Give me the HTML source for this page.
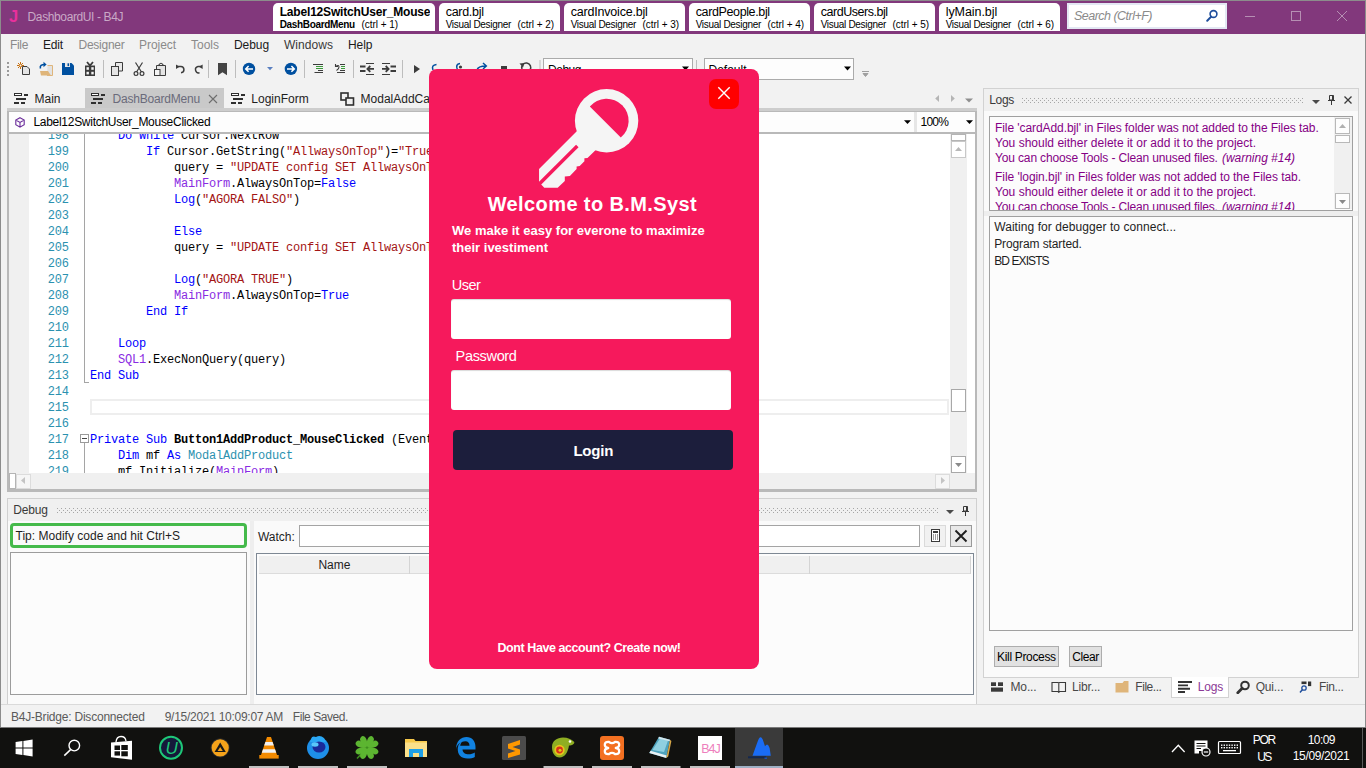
<!DOCTYPE html>
<html><head><meta charset="utf-8"><title>DashboardUI - B4J</title>
<style>
*{box-sizing:border-box;margin:0;padding:0}
html,body{width:1366px;height:768px;overflow:hidden;background:#f2f2f2;font-family:"Liberation Sans",sans-serif;font-size:12px;color:#1e1e1e}
.a{position:absolute}
.t{position:absolute;white-space:nowrap;line-height:1}
.code{font-family:"Liberation Mono",monospace;font-size:12px;letter-spacing:-0.201px;position:absolute;white-space:pre;line-height:16px;color:#000}
.ln{color:#2b91af}
.kw{color:#0000ff}.st{color:#a31515}.ob{color:#8a2be2}.ty{color:#2b91af}
</style></head><body>
<!-- sec_title -->
<div class="a" style="left:0px;top:0px;width:1366px;height:34px;background:#82387c;"></div>
<div class="a" style="left:0px;top:0px;width:1366px;height:1px;background:#8c8c8c;"></div>
<span class="t" style="left:9px;top:8px;font-size:16.5px;font-weight:bold;color:#e8309c;">J</span>
<span class="t" style="left:27.6px;top:11px;font-size:12px;color:#c9a9c6;letter-spacing:-0.385px;">DashboardUI - B4J</span>
<div class="a" style="left:273px;top:3px;width:162px;height:28px;background:#ffffff;border-radius:5px 5px 0 0;"></div>
<div class="a" style="left:439px;top:3px;width:121px;height:28px;background:#ffffff;border-radius:5px 5px 0 0;"></div>
<div class="a" style="left:564px;top:3px;width:121px;height:28px;background:#ffffff;border-radius:5px 5px 0 0;"></div>
<div class="a" style="left:689px;top:3px;width:121px;height:28px;background:#ffffff;border-radius:5px 5px 0 0;"></div>
<div class="a" style="left:814px;top:3px;width:121px;height:28px;background:#ffffff;border-radius:5px 5px 0 0;"></div>
<div class="a" style="left:939px;top:3px;width:121px;height:28px;background:#ffffff;border-radius:5px 5px 0 0;"></div>
<div class="a" style="left:273px;top:3px;width:157px;height:28px;overflow:hidden">
<span class="t" style="left:6.7px;top:3px;font-size:12px;font-weight:bold;color:#000;letter-spacing:-0.180px;">Label12SwitchUser_MouseClicked</span>
<span class="t" style="left:6.7px;top:17px;font-size:10px;font-weight:bold;color:#000;letter-spacing:-0.343px;">DashBoardMenu</span>
<span class="t" style="left:88.5px;top:17px;font-size:10px;color:#000;letter-spacing:-0.045px;">(ctrl + 1)</span>
</div>
<span class="t" style="left:445.7px;top:6px;font-size:12.5px;color:#000;letter-spacing:-0.287px;">card.bjl</span>
<span class="t" style="left:445.7px;top:20px;font-size:10px;color:#000;letter-spacing:-0.304px;">Visual Designer</span>
<span class="t" style="left:517.5px;top:20px;font-size:10px;color:#000;letter-spacing:-0.045px;">(ctrl + 2)</span>
<span class="t" style="left:570.7px;top:6px;font-size:12.5px;color:#000;letter-spacing:-0.193px;">cardInvoice.bjl</span>
<span class="t" style="left:570.7px;top:20px;font-size:10px;color:#000;letter-spacing:-0.304px;">Visual Designer</span>
<span class="t" style="left:642.5px;top:20px;font-size:10px;color:#000;letter-spacing:-0.045px;">(ctrl + 3)</span>
<span class="t" style="left:695.7px;top:6px;font-size:12.5px;color:#000;letter-spacing:-0.373px;">cardPeople.bjl</span>
<span class="t" style="left:695.7px;top:20px;font-size:10px;color:#000;letter-spacing:-0.304px;">Visual Designer</span>
<span class="t" style="left:767.5px;top:20px;font-size:10px;color:#000;letter-spacing:-0.045px;">(ctrl + 4)</span>
<span class="t" style="left:820.7px;top:6px;font-size:12.5px;color:#000;letter-spacing:-0.457px;">cardUsers.bjl</span>
<span class="t" style="left:820.7px;top:20px;font-size:10px;color:#000;letter-spacing:-0.304px;">Visual Designer</span>
<span class="t" style="left:892.5px;top:20px;font-size:10px;color:#000;letter-spacing:-0.045px;">(ctrl + 5)</span>
<span class="t" style="left:945.7px;top:6px;font-size:12.5px;color:#000;letter-spacing:-0.060px;">lyMain.bjl</span>
<span class="t" style="left:945.7px;top:20px;font-size:10px;color:#000;letter-spacing:-0.304px;">Visual Designer</span>
<span class="t" style="left:1017.5px;top:20px;font-size:10px;color:#000;letter-spacing:-0.045px;">(ctrl + 6)</span>
<div class="a" style="left:1067px;top:3px;width:160px;height:26px;background:#ffffff;border:2px solid #e3e8f3;"></div>
<span class="t" style="left:1074px;top:10px;font-size:12.5px;font-style:italic;color:#8a8a8a;letter-spacing:-0.519px;">Search (Ctrl+F)</span>
<svg class="a" style="left:1204px;top:8px" width="16" height="16" viewBox="0 0 16 16"><circle cx="9.5" cy="6" r="3.4" fill="none" stroke="#1f4e9c" stroke-width="1.6"/><path d="M7.2 8.6 L3.2 12.8" stroke="#1f4e9c" stroke-width="2" stroke-linecap="round"/></svg>
<svg class="a" style="left:1240px;top:6px" width="120" height="22" viewBox="0 0 120 22"><g stroke="#b68fb3" stroke-width="1" fill="none"><path d="M5 10.5 H15"/><rect x="51.5" y="5.5" width="9" height="9"/><path d="M97 5 L107 15 M107 5 L97 15"/></g></svg>
<!-- sec_menu -->
<span class="t" style="left:10px;top:39px;font-size:12px;color:#8a8a8a;letter-spacing:-0.334px;">File</span>
<span class="t" style="left:43px;top:39px;font-size:12px;color:#1a1a1a;letter-spacing:-0.169px;">Edit</span>
<span class="t" style="left:78.5px;top:39px;font-size:12px;color:#8a8a8a;letter-spacing:-0.253px;">Designer</span>
<span class="t" style="left:139px;top:39px;font-size:12px;color:#8a8a8a;letter-spacing:-0.050px;">Project</span>
<span class="t" style="left:191px;top:39px;font-size:12px;color:#8a8a8a;letter-spacing:-0.003px;">Tools</span>
<span class="t" style="left:234px;top:39px;font-size:12px;color:#1a1a1a;letter-spacing:-0.072px;">Debug</span>
<span class="t" style="left:284px;top:39px;font-size:12px;color:#3a3a3a;letter-spacing:0.046px;">Windows</span>
<span class="t" style="left:348px;top:39px;font-size:12px;color:#1a1a1a;letter-spacing:-0.045px;">Help</span>
<!-- sec_toolbar -->
<svg class="a" style="left:0;top:57px" width="880" height="26" viewBox="0 57 880 26"><rect x="7" y="62" width="2" height="2" fill="#9a9a9a"/><rect x="7" y="66" width="2" height="2" fill="#9a9a9a"/><rect x="7" y="70" width="2" height="2" fill="#9a9a9a"/><rect x="7" y="74" width="2" height="2" fill="#9a9a9a"/><rect x="103" y="60" width="1" height="18" fill="#bdbdbd"/><rect x="208" y="60" width="1" height="18" fill="#bdbdbd"/><rect x="235" y="60" width="1" height="18" fill="#bdbdbd"/><rect x="304" y="60" width="1" height="18" fill="#bdbdbd"/><rect x="353" y="60" width="1" height="18" fill="#bdbdbd"/><rect x="402" y="60" width="1" height="18" fill="#bdbdbd"/><rect x="539.5" y="60" width="1" height="18" fill="#bdbdbd"/><rect x="696" y="60" width="1" height="18" fill="#bdbdbd"/><g stroke="#c8700f" stroke-width="1" fill="none"><path d="M20.5 62 V69 M17 65.5 H24 M18 63 L23 68 M23 63 L18 68"/></g><circle cx="20.5" cy="65.5" r="1" fill="#f0f0f0"/><path d="M22.5 66.5 H27 L29.5 69 V74.5 H22.5 Z" fill="#e4e4e4" stroke="#3c3c3c" stroke-width="1"/><path d="M47.5 65.5 H52.5 V75.5 H47" fill="#e2e2e2" stroke="#dfb57a" stroke-width="1"/><path d="M40 71 H48 L51 75.5 H41 Z" fill="#dfb57a"/><path d="M40.5 68.5 C39.5 65.5 41.5 64.5 45 64.5" fill="none" stroke="#0050a0" stroke-width="1.6"/><path d="M43.5 61.8 L46.6 64.5 L43.5 67.2 Z" fill="#0050a0"/><path d="M62 63 H71.5 L74 65.5 V75 H62 Z" fill="#0050a0"/><rect x="65" y="63" width="5" height="4" fill="#e8e8e8"/><rect x="67.5" y="63.3" width="1.6" height="2.8" fill="#0050a0"/><rect x="85" y="65.5" width="10" height="10.5" fill="#3c3c3c"/><path d="M87 62 L90 65.5 L93 62" fill="none" stroke="#3c3c3c" stroke-width="1.8"/><rect x="86.5" y="67.2" width="2.4" height="2.6" fill="#f4f4f4"/><rect x="91.3" y="67.2" width="2.4" height="2.6" fill="#f4f4f4"/><rect x="86.5" y="71.8" width="2.4" height="2.6" fill="#f4f4f4"/><rect x="91.3" y="71.8" width="2.4" height="2.6" fill="#f4f4f4"/><path d="M115.5 67 V62.5 H122.5 V71 H119" fill="#e8e8e8" stroke="#3c3c3c" stroke-width="1"/><rect x="111.5" y="66.5" width="7" height="9" fill="#e4e4e4" stroke="#3c3c3c" stroke-width="1"/><g fill="none" stroke="#3c3c3c" stroke-width="1.2"><path d="M135.5 62.5 L141.5 72 M142.5 62.5 L136.5 72"/><circle cx="136" cy="73.6" r="1.9"/><circle cx="142" cy="73.6" r="1.9"/></g><path d="M160 75.5 H165.5 V65.5 H156.5 V69" fill="#e4e4e4" stroke="#3c3c3c" stroke-width="1"/><path d="M158.5 65.5 Q161 61 163.5 65.5" fill="none" stroke="#3c3c3c" stroke-width="1.2"/><rect x="154.5" y="69.5" width="5.5" height="6" fill="#f4f4f4" stroke="#3c3c3c" stroke-width="1"/><path d="M177 66.5 H180.5 A3 3 0 0 1 181 72.8 " fill="none" stroke="#3c3c3c" stroke-width="1.5"/><path d="M176 64.5 V69 L179.5 66.7 Z" fill="#3c3c3c"/><path d="M201.5 66.5 H198 A3 3 0 0 0 199.5 72.8" fill="none" stroke="#3c3c3c" stroke-width="1.5"/><path d="M202.6 64.5 V69 L199 66.7 Z" fill="#3c3c3c"/><path d="M218 63 H227 V75.3 L222.5 72.2 L218 75.3 Z" fill="#444"/><circle cx="249" cy="68.9" r="6.2" fill="#0050a0"/><path d="M246 68.9 H253 M248.6 66 L245.7 68.9 L248.6 71.8" fill="none" stroke="#fff" stroke-width="1.5"/><path d="M267 67 H273 L270 70.2 Z" fill="#5a7fc0"/><circle cx="290.9" cy="68.9" r="6.2" fill="#0050a0"/><path d="M287 68.9 H294 M291.4 66 L294.3 68.9 L291.4 71.8" fill="none" stroke="#fff" stroke-width="1.5"/><g stroke-width="1"><path d="M313 64.5 H323 M318 70.5 H323 M314.5 72.5 H323" stroke="#3c3c3c"/><path d="M316 66.5 H323 M316 68.5 H323" stroke="#3a9a3a"/></g><g stroke-width="1" fill="none"><path d="M340 64.5 H345 M340 70.5 H345 M337 72.5 H345" stroke="#3c3c3c"/><path d="M341 66.5 H345 M341 68.5 H345" stroke="#3a9a3a"/><path d="M335.5 64 V66.5 H338 M336 66.3 Q339 64.5 339 67 Q339 69 336.5 70.5" stroke="#3c3c3c" stroke-width="1.1"/></g><g stroke="#3c3c3c" fill="none"><path d="M366 63.5 H374 M366 74.5 H374" stroke-width="1"/><path d="M360 66.5 H365.5 M360 71 H365.5" stroke-width="2"/><path d="M367.5 68.9 H374 M370.3 66 L367.4 68.9 L370.3 71.8" stroke-width="1.8"/></g><g stroke="#3c3c3c" fill="none"><path d="M382 63.5 H390 M382 74.5 H390" stroke-width="1"/><path d="M390.5 66.5 H396 M390.5 71 H396" stroke-width="2"/><path d="M382 68.9 H388.5 M385.7 66 L388.6 68.9 L385.7 71.8" stroke-width="1.8"/></g><path d="M414 65 L420 69.1 L414 73.2 Z" fill="#3c3c3c"/><g fill="none" stroke="#0050a0" stroke-width="1.5"><path d="M433 70 Q431 65 436.5 64.5"/><path d="M457.5 70 Q455 64 460 63.5"/><path d="M477 70 Q478 66 486 66 M483 63 L486.3 66 L483 69"/></g><circle cx="460.5" cy="67" r="1.6" fill="#3c3c3c"/><rect x="501" y="66" width="6" height="6" fill="#3c3c3c"/><path d="M522 69 A4.5 4.5 0 1 1 530 70" fill="none" stroke="#3c3c3c" stroke-width="1.5"/><path d="M519.5 63.5 L524.5 63 L523 67.5 Z" fill="#3c3c3c"/><path d="M862 71.5 H869 M863 73.5 H868 L865.5 76.5 Z" stroke="#a0a0a0" fill="#a0a0a0" stroke-width="1"/></svg>
<div class="a" style="left:543px;top:58px;width:150px;height:22px;background:#fdfdfd;border:1px solid #ababab;"></div>
<span class="t" style="left:548px;top:64px;font-size:12px;color:#000;letter-spacing:-0.472px;">Debug</span>
<svg class="a" style="left:682px;top:66px" width="8" height="5"><path d="M0 0.5 H7 L3.5 4.5 Z" fill="#000"/></svg>
<div class="a" style="left:704px;top:58px;width:150px;height:22px;background:#fdfdfd;border:1px solid #ababab;"></div>
<span class="t" style="left:708.5px;top:64px;font-size:12px;color:#000;letter-spacing:-0.003px;">Default</span>
<svg class="a" style="left:844px;top:66px" width="8" height="5"><path d="M0 0.5 H7 L3.5 4.5 Z" fill="#000"/></svg>
<!-- sec_editor -->
<div class="a" style="left:85px;top:88px;width:139px;height:21px;background:#c9c9c9;"></div>
<svg class="a" style="left:14px;top:93px" width="15" height="11" viewBox="0 0 15 11"><rect x="0.5" y="0.5" width="7" height="2" fill="#fff" stroke="#2f2f2f" stroke-width="1"/><rect x="10" y="1" width="4" height="2" fill="#2f2f2f"/><rect x="2" y="5" width="10" height="2" fill="#2f2f2f"/><rect x="0" y="9" width="5" height="2" fill="#2f2f2f"/><rect x="7" y="9" width="4" height="2" fill="#2f2f2f"/></svg>
<span class="t" style="left:34.5px;top:93px;font-size:12px;color:#1e1e1e;letter-spacing:-0.002px;">Main</span>
<svg class="a" style="left:91px;top:93px" width="15" height="11" viewBox="0 0 15 11"><rect x="0.5" y="0.5" width="7" height="2" fill="#fff" stroke="#2f2f2f" stroke-width="1"/><rect x="10" y="1" width="4" height="2" fill="#2f2f2f"/><rect x="2" y="5" width="10" height="2" fill="#2f2f2f"/><rect x="0" y="9" width="5" height="2" fill="#2f2f2f"/><rect x="7" y="9" width="4" height="2" fill="#2f2f2f"/></svg>
<span class="t" style="left:112.5px;top:93px;font-size:12px;color:#6b6b7b;letter-spacing:-0.196px;">DashBoardMenu</span>
<svg class="a" style="left:208px;top:94px" width="10" height="10"><path d="M1 1 L9 9 M9 1 L1 9" stroke="#6e6e6e" stroke-width="1.1"/></svg>
<svg class="a" style="left:231px;top:93px" width="15" height="11" viewBox="0 0 15 11"><rect x="0.5" y="0.5" width="7" height="2" fill="#fff" stroke="#2f2f2f" stroke-width="1"/><rect x="10" y="1" width="4" height="2" fill="#2f2f2f"/><rect x="2" y="5" width="10" height="2" fill="#2f2f2f"/><rect x="0" y="9" width="5" height="2" fill="#2f2f2f"/><rect x="7" y="9" width="4" height="2" fill="#2f2f2f"/></svg>
<span class="t" style="left:251.3px;top:93px;font-size:12px;color:#1e1e1e;letter-spacing:0.016px;">LoginForm</span>
<svg class="a" style="left:340px;top:92px" width="15" height="14"><rect x="1" y="1" width="7" height="7" fill="none" stroke="#2f2f2f" stroke-width="1.6"/><rect x="6" y="6" width="7.5" height="7" fill="#f0f0f0" stroke="#2f2f2f" stroke-width="1.6"/></svg>
<span class="t" style="left:360.6px;top:93px;font-size:12px;color:#1e1e1e;letter-spacing:-0.004px;">ModalAddCard</span>
<svg class="a" style="left:930px;top:92px" width="46" height="12"><path d="M9 3 V10 L5.2 6.5 Z" fill="#b5b5b5"/><path d="M21 3 V10 L24.8 6.5 Z" fill="#b5b5b5"/><path d="M35 6.5 H43 L39 10.5 Z" fill="#8f8f8f"/></svg>
<div class="a" style="left:7px;top:108px;width:970px;height:384px;background:#cdcdcd;"></div>
<div class="a" style="left:7px;top:111px;width:970px;height:381px;background:#b9b9b9;"></div>
<div class="a" style="left:9px;top:112px;width:905px;height:20px;background:#fdfdfd;"></div>
<div class="a" style="left:914px;top:112px;width:3px;height:20px;background:#e6e6e6;"></div>
<div class="a" style="left:917px;top:112px;width:58px;height:20px;background:#fdfdfd;"></div>
<svg class="a" style="left:15px;top:117px" width="10" height="11" viewBox="0 0 10 11"><path d="M5 0.7 L9.2 3 V7.8 L5 10.2 L0.8 7.8 V3 Z M0.8 3 L5 5.4 L9.2 3 M5 5.4 V10.2" fill="none" stroke="#6a2c9a" stroke-width="1.1"/></svg>
<span class="t" style="left:33.4px;top:116px;font-size:12px;color:#000;letter-spacing:-0.281px;">Label12SwitchUser_MouseClicked</span>
<svg class="a" style="left:904px;top:120px" width="8" height="5"><path d="M0 0.3 H7 L3.5 4 Z" fill="#000"/></svg>
<span class="t" style="left:920.5px;top:116px;font-size:12px;color:#000;letter-spacing:-0.798px;">100%</span>
<svg class="a" style="left:966px;top:120px" width="8" height="5"><path d="M0 0.3 H7 L3.5 4 Z" fill="#000"/></svg>
<div class="a" style="left:9px;top:134px;width:966px;height:339px;background:#fff;overflow:hidden">
<div class="a" style="left:0px;top:0px;width:20px;height:339px;background:#f0f0f0;"></div>
<div class="a" style="left:75px;top:0px;width:1px;height:249px;background:#a5a5a5;"></div>
<div class="a" style="left:75px;top:309px;width:1px;height:30px;background:#a5a5a5;"></div>
<div class="a" style="left:81px;top:265px;width:859px;height:16px;background:#fff;border:2px solid #eeeeee;"></div>
<div class="code ln" style="left:38.7px;top:-6px">198</div>
<div class="code" style="left:109px;top:-6px"><span class="kw">Do While </span>Cursor.NextRow</div>
<div class="code ln" style="left:38.7px;top:10px">199</div>
<div class="code" style="left:137px;top:10px"><span class="kw">If </span>Cursor.GetString(<span class="st">"AllwaysOnTop"</span>)=<span class="st">"True"</span><span class="kw"> Then</span></div>
<div class="code ln" style="left:38.7px;top:26px">200</div>
<div class="code" style="left:165px;top:26px">query = <span class="st">"UPDATE config SET AllwaysOnTop='False'"</span></div>
<div class="code ln" style="left:38.7px;top:42px">201</div>
<div class="code" style="left:165px;top:42px"><span class="ob">MainForm</span>.AlwaysOnTop=<span class="kw">False</span></div>
<div class="code ln" style="left:38.7px;top:58px">202</div>
<div class="code" style="left:165px;top:58px"><span class="kw">Log</span>(<span class="st">"AGORA FALSO"</span>)</div>
<div class="code ln" style="left:38.7px;top:74px">203</div>
<div class="code ln" style="left:38.7px;top:90px">204</div>
<div class="code" style="left:165px;top:90px"><span class="kw">Else</span></div>
<div class="code ln" style="left:38.7px;top:106px">205</div>
<div class="code" style="left:165px;top:106px">query = <span class="st">"UPDATE config SET AllwaysOnTop='True'"</span></div>
<div class="code ln" style="left:38.7px;top:122px">206</div>
<div class="code ln" style="left:38.7px;top:138px">207</div>
<div class="code" style="left:165px;top:138px"><span class="kw">Log</span>(<span class="st">"AGORA TRUE"</span>)</div>
<div class="code ln" style="left:38.7px;top:154px">208</div>
<div class="code" style="left:165px;top:154px"><span class="ob">MainForm</span>.AlwaysOnTop=<span class="kw">True</span></div>
<div class="code ln" style="left:38.7px;top:170px">209</div>
<div class="code" style="left:137px;top:170px"><span class="kw">End If</span></div>
<div class="code ln" style="left:38.7px;top:186px">210</div>
<div class="code ln" style="left:38.7px;top:202px">211</div>
<div class="code" style="left:109px;top:202px"><span class="kw">Loop</span></div>
<div class="code ln" style="left:38.7px;top:218px">212</div>
<div class="code" style="left:109px;top:218px"><span class="ob">SQL1</span>.ExecNonQuery(query)</div>
<div class="code ln" style="left:38.7px;top:234px">213</div>
<div class="code" style="left:81px;top:234px"><span class="kw">End Sub</span></div>
<div class="code ln" style="left:38.7px;top:250px">214</div>
<div class="code ln" style="left:38.7px;top:266px">215</div>
<div class="code ln" style="left:38.7px;top:282px">216</div>
<div class="code ln" style="left:38.7px;top:298px">217</div>
<div class="code" style="left:81px;top:298px"><span class="kw">Private Sub </span><b>Button1AddProduct_MouseClicked</b> (EventData <span class="kw">As </span><span class="ty">MouseEvent</span>)</div>
<div class="code ln" style="left:38.7px;top:314px">218</div>
<div class="code" style="left:109px;top:314px"><span class="kw">Dim </span>mf <span class="kw">As </span><span class="ty">ModalAddProduct</span></div>
<div class="code ln" style="left:38.7px;top:330px">219</div>
<div class="code" style="left:109px;top:330px">mf.Initialize(<span class="ob">MainForm</span>)</div>
<div class="a" style="left:71px;top:300px;width:9px;height:9px;background:#fff;border:1px solid #9a9a9a"></div><div class="a" style="left:73px;top:304px;width:5px;height:1px;background:#444"></div>
<div class="a" style="left:75px;top:248px;width:5px;height:1px;background:#a5a5a5;"></div>
<div class="a" style="left:941px;top:0px;width:17px;height:339px;background:#f0f0f0;"></div>
<div class="a" style="left:942px;top:0px;width:15px;height:7px;background:#fff;border:1px solid #b4b4b4;"></div>
<div class="a" style="left:942px;top:7px;width:15px;height:17px;background:#fff;border:1px solid #c8c8c8;"></div>
<svg class="a" style="left:946px;top:12px" width="8" height="6"><path d="M0 5 H7 L3.5 1 Z" fill="#b8b8b8"/></svg>
<div class="a" style="left:942px;top:255px;width:15px;height:23px;background:#fff;border:1px solid #a8a8a8;"></div>
<div class="a" style="left:942px;top:322px;width:15px;height:17px;background:#fff;border:1px solid #a8a8a8;"></div>
<svg class="a" style="left:946px;top:328px" width="8" height="6"><path d="M0 1 H7 L3.5 5 Z" fill="#8a8a8a"/></svg>
</div>
<div class="a" style="left:9px;top:473px;width:966px;height:16px;background:#f0f0f0;"></div>
<div class="a" style="left:9px;top:473px;width:7px;height:16px;background:#fff;border:1px solid #b4b4b4;"></div>
<div class="a" style="left:16px;top:474px;width:15px;height:15px;background:#f6f6f6;border:1px solid #dcdcdc;"></div>
<svg class="a" style="left:20px;top:477px" width="6" height="8"><path d="M5 0 V7 L1 3.5 Z" fill="#c4c4c4"/></svg>
<div class="a" style="left:935px;top:474px;width:15px;height:15px;background:#f6f6f6;border:1px solid #dcdcdc;"></div>
<svg class="a" style="left:940px;top:477px" width="6" height="8"><path d="M1 0 V7 L5 3.5 Z" fill="#c4c4c4"/></svg>
<!-- sec_debug -->
<div class="a" style="left:7px;top:498px;width:970px;height:207px;background:#f0f0f0;border:1px solid #d0d0d0;"></div>
<div class="a" style="left:8px;top:521px;width:968px;height:183px;background:#fafafa;"></div>
<span class="t" style="left:13.3px;top:504px;font-size:12px;color:#3a3a3a;letter-spacing:-0.172px;">Debug</span>
<svg class="a" style="left:57px;top:508px" width="882" height="5"><defs><pattern id="g57" width="4" height="4" patternUnits="userSpaceOnUse"><rect x="0" y="0" width="1" height="1" fill="#a6a6a6"/><rect x="2" y="2" width="1" height="1" fill="#a6a6a6"/></pattern></defs><rect width="882" height="5" fill="url(#g57)"/></svg>
<svg class="a" style="left:945px;top:505px" width="28" height="12"><path d="M1 5 H9 L5 9 Z" fill="#4a4a4a"/><path d="M18.5 1.5 H22.5 V6 H18.5 Z M17 6.5 H24 M20.5 6.5 V11" fill="none" stroke="#3a3a3a" stroke-width="1"/><rect x="21" y="1.5" width="1.5" height="4.5" fill="#3a3a3a"/></svg>
<div class="a" style="left:10px;top:523px;width:237px;height:25px;background:#fafafa;border:3px solid #45ba4b;border-radius:4px;"></div>
<span class="t" style="left:15.5px;top:530px;font-size:12px;color:#1e1e1e;letter-spacing:0.021px;">Tip: Modify code and hit Ctrl+S</span>
<div class="a" style="left:10px;top:552px;width:237px;height:143px;background:#fcfcfc;border:1px solid #9c9c9c;"></div>
<div class="a" style="left:250px;top:521px;width:4px;height:183px;background:#eeeeee;"></div>
<span class="t" style="left:258px;top:531px;font-size:12px;color:#1e1e1e;letter-spacing:-0.033px;">Watch:</span>
<div class="a" style="left:299px;top:525px;width:621px;height:22px;background:#fff;border:1px solid #a4a4a4;"></div>
<div class="a" style="left:924px;top:525px;width:22px;height:22px;background:#f1f1f1;border:1px solid #dadada;"></div>
<svg class="a" style="left:930px;top:529px" width="11" height="13"><rect x="1.5" y="0.5" width="8" height="12" fill="#fff" stroke="#3a3a3a" stroke-width="1"/><rect x="3" y="2" width="5" height="2" fill="#3a3a3a"/><g fill="#3a3a3a"><rect x="3" y="5.5" width="1" height="1"/><rect x="5" y="5.5" width="1" height="1"/><rect x="7" y="5.5" width="1" height="1"/><rect x="3" y="7.5" width="1" height="1"/><rect x="5" y="7.5" width="1" height="1"/><rect x="7" y="7.5" width="1" height="1"/><rect x="3" y="9.5" width="1" height="1"/><rect x="5" y="9.5" width="1" height="1"/><rect x="7" y="9.5" width="1" height="1"/></g></svg>
<div class="a" style="left:950px;top:525px;width:22px;height:22px;background:#e9e9e9;border:1px solid #9a9a9a;"></div>
<svg class="a" style="left:954px;top:529px" width="14" height="14"><path d="M1.5 1.5 L12.5 12.5 M12.5 1.5 L1.5 12.5" stroke="#1e1e1e" stroke-width="1.9"/></svg>
<div class="a" style="left:256px;top:553px;width:718px;height:142px;background:#fcfcfc;border:1px solid #7e8894;"></div>
<div class="a" style="left:259px;top:556px;width:711px;height:18px;background:#f0f0f0;border-bottom:1px solid #dcdcdc;"></div>
<div class="a" style="left:409px;top:556px;width:1px;height:18px;background:#d4d4d4;"></div>
<div class="a" style="left:809px;top:556px;width:1px;height:18px;background:#d4d4d4;"></div>
<div class="a" style="left:970px;top:556px;width:1px;height:18px;background:#d4d4d4;"></div>
<span class="t" style="left:318.4px;top:559px;font-size:12px;color:#1e1e1e;letter-spacing:-0.002px;">Name</span>
<!-- sec_logs -->
<div class="a" style="left:983px;top:88px;width:376px;height:590px;background:#f0f0f0;border:1px solid #d2d2d2;"></div>
<div class="a" style="left:984px;top:111px;width:374px;height:566px;background:#fafafa;"></div>
<div class="a" style="left:984px;top:211px;width:374px;height:5px;background:#eeeeee;"></div>
<span class="t" style="left:989.3px;top:94px;font-size:12px;color:#3a3a3a;letter-spacing:-0.355px;">Logs</span>
<svg class="a" style="left:1022px;top:98px" width="282" height="5"><defs><pattern id="g1022" width="4" height="4" patternUnits="userSpaceOnUse"><rect x="0" y="0" width="1" height="1" fill="#a6a6a6"/><rect x="2" y="2" width="1" height="1" fill="#a6a6a6"/></pattern></defs><rect width="282" height="5" fill="url(#g1022)"/></svg>
<svg class="a" style="left:1310px;top:94px" width="46" height="12"><path d="M2 6 H10 L6 10 Z" fill="#4a4a4a"/><path d="M19.5 1.5 H23.5 V6 H19.5 Z M18 6.5 H25 M21.5 6.5 V11" fill="none" stroke="#3a3a3a" stroke-width="1"/><rect x="22" y="1.5" width="1.5" height="4.5" fill="#3a3a3a"/><path d="M34.5 2.5 L41.5 9.5 M41.5 2.5 L34.5 9.5" stroke="#3a3a3a" stroke-width="1.3"/></svg>
<div class="a" style="left:989px;top:116px;width:364px;height:95px;background:#fcfcfc;border:1px solid #a0a0a0;overflow:hidden">
<span class="t" style="left:5px;top:5px;font-size:12px;color:#850085;letter-spacing:-0.077px;">File 'cardAdd.bjl' in Files folder was not added to the Files tab.</span>
<span class="t" style="left:5px;top:20px;font-size:12px;color:#850085;letter-spacing:0.011px;">You should either delete it or add it to the project.</span>
<span class="t" style="left:5px;top:35px;font-size:12px;color:#850085;letter-spacing:-0.144px;">You can choose Tools - Clean unused files.</span>
<span class="t" style="left:232px;top:35px;font-size:12px;font-style:italic;color:#850085;letter-spacing:-0.029px;">(warning #14)</span>
<span class="t" style="left:5px;top:54px;font-size:12px;color:#850085;letter-spacing:-0.053px;">File 'login.bjl' in Files folder was not added to the Files tab.</span>
<span class="t" style="left:5px;top:69px;font-size:12px;color:#850085;letter-spacing:0.011px;">You should either delete it or add it to the project.</span>
<span class="t" style="left:5px;top:84px;font-size:12px;color:#850085;letter-spacing:-0.144px;">You can choose Tools - Clean unused files.</span>
<span class="t" style="left:232px;top:84px;font-size:12px;font-style:italic;color:#850085;letter-spacing:-0.029px;">(warning #14)</span>
<div class="a" style="left:344px;top:0px;width:19px;height:92px;background:#f0f0f0;"></div>
<div class="a" style="left:345px;top:1px;width:15px;height:16px;background:#fdfdfd;border:1px solid #b8b8b8;"></div>
<svg class="a" style="left:349px;top:6px" width="8" height="6"><path d="M0 5 H7 L3.5 1 Z" fill="#b0b0b0"/></svg>
<div class="a" style="left:345px;top:18px;width:15px;height:8px;background:#fdfdfd;border:1px solid #b8b8b8;"></div>
<div class="a" style="left:345px;top:76px;width:15px;height:16px;background:#fdfdfd;border:1px solid #b8b8b8;"></div>
<svg class="a" style="left:349px;top:82px" width="8" height="6"><path d="M0 1 H7 L3.5 5 Z" fill="#8a8a8a"/></svg>
</div>
<div class="a" style="left:989px;top:216px;width:364px;height:415px;background:#fcfcfc;border:1px solid #a0a0a0;"></div>
<span class="t" style="left:994.2px;top:221px;font-size:12px;color:#1e1e1e;letter-spacing:0.069px;">Waiting for debugger to connect...</span>
<span class="t" style="left:994.2px;top:238px;font-size:12px;color:#1e1e1e;letter-spacing:-0.110px;">Program started.</span>
<span class="t" style="left:994.2px;top:255px;font-size:12px;color:#1e1e1e;letter-spacing:-0.909px;">BD EXISTS</span>
<div class="a" style="left:994px;top:646px;width:65px;height:21px;background:#e1e1e1;border:1px solid #adadad;"></div>
<span class="t" style="left:997.1px;top:651px;font-size:12px;color:#000;letter-spacing:-0.340px;">Kill Process</span>
<div class="a" style="left:1069px;top:646px;width:33px;height:21px;background:#e1e1e1;border:1px solid #adadad;"></div>
<span class="t" style="left:1072.3px;top:651px;font-size:12px;color:#000;letter-spacing:-0.435px;">Clear</span>
<div class="a" style="left:1171px;top:677px;width:58px;height:21px;background:#ffffff;border:1px solid #d2d2d2;border-top:none;"></div>
<svg class="a" style="left:991px;top:682px" width="13" height="11"><rect x="0" y="0.3" width="5" height="3.7" fill="#3a3a3a"/><rect x="7" y="0.3" width="5" height="3.7" fill="#3a3a3a"/><rect x="0" y="5.5" width="12" height="4.2" fill="#3a3a3a"/></svg>
<span class="t" style="left:1010.5px;top:681px;font-size:12px;color:#484848;letter-spacing:-0.134px;">Mo...</span>
<svg class="a" style="left:1051px;top:681px" width="16" height="12"><path d="M1 1.5 H7 L7.8 2.3 L8.6 1.5 H14.5 V10.5 H8.6 L7.8 11.3 L7 10.5 H1 Z M7.8 2.3 V11.3" fill="none" stroke="#3a3a3a" stroke-width="1.1"/></svg>
<span class="t" style="left:1072px;top:681px;font-size:12px;color:#484848;letter-spacing:-0.150px;">Libr...</span>
<svg class="a" style="left:1115px;top:680px" width="15" height="13"><path d="M0.5 3 H7.5 L9 1 H13.5 V12.5 H0.5 Z" fill="#dfb57a"/></svg>
<span class="t" style="left:1135.3px;top:681px;font-size:12px;color:#484848;letter-spacing:-0.448px;">File...</span>
<svg class="a" style="left:1178px;top:681px" width="14" height="12"><path d="M0 1 H14 M0 4.4 H10 M0 7.8 H12 M0 11 H7" stroke="#333" stroke-width="1.9"/></svg>
<span class="t" style="left:1197.7px;top:681px;font-size:12px;color:#8b3a96;letter-spacing:-0.180px;">Logs</span>
<svg class="a" style="left:1236px;top:680px" width="15" height="14"><circle cx="9" cy="5.5" r="3.8" fill="none" stroke="#333" stroke-width="2"/><path d="M6.2 8.3 L1.8 12.7" stroke="#333" stroke-width="2.8" stroke-linecap="round"/></svg>
<span class="t" style="left:1255.7px;top:681px;font-size:12px;color:#484848;letter-spacing:-0.179px;">Qui...</span>
<svg class="a" style="left:1299px;top:681px" width="14" height="13"><rect x="2.5" y="0.5" width="5" height="2.6" fill="#333"/><rect x="9" y="0.5" width="3.2" height="4.6" fill="#333"/><circle cx="5" cy="7" r="2.2" fill="none" stroke="#1f4e9c" stroke-width="1.3"/><path d="M3.3 8.8 L1 11.5" stroke="#1f4e9c" stroke-width="1.5"/></svg>
<span class="t" style="left:1319px;top:681px;font-size:12px;color:#484848;letter-spacing:-0.379px;">Fin...</span>
<!-- sec_status -->
<div class="a" style="left:0px;top:704px;width:1366px;height:1px;background:#dadada;"></div>
<span class="t" style="left:11px;top:711px;font-size:12px;color:#5a5a5a;letter-spacing:-0.214px;">B4J-Bridge: Disconnected</span>
<span class="t" style="left:164.7px;top:711px;font-size:12px;color:#5a5a5a;letter-spacing:-0.274px;">9/15/2021 10:09:07 AM</span>
<span class="t" style="left:292.8px;top:711px;font-size:12px;color:#5a5a5a;letter-spacing:-0.457px;">File Saved.</span>
<div class="a" style="left:0px;top:1px;width:1px;height:727px;background:#8c8c8c;"></div>
<div class="a" style="left:1365px;top:1px;width:1px;height:727px;background:#8c8c8c;"></div>
<!-- sec_taskbar -->
<div class="a" style="left:0px;top:727px;width:1366px;height:1px;background:#7a7a7a;"></div>
<div class="a" style="left:0px;top:728px;width:1366px;height:40px;background:#11110f;"></div>
<div class="a" style="left:735px;top:728px;width:48px;height:40px;background:#3a3a3a;"></div>
<svg class="a" style="left:0;top:728px" width="1366" height="40" viewBox="0 728 1366 40"><g fill="#fff"><path d="M15.6 742 L22.4 741 V747.5 H15.6 Z M23.4 740.9 L32.6 739.6 V747.5 H23.4 Z M15.6 748.5 H22.4 V755 L15.6 754 Z M23.4 748.5 H32.6 V756.4 L23.4 755.1 Z"/></g><circle cx="74.3" cy="745.6" r="5.3" fill="none" stroke="#fff" stroke-width="1.4"/><path d="M70.6 749.6 L64.3 755.6" stroke="#fff" stroke-width="1.5"/><path d="M111 742.5 L132 740.8 V759.8 L111 757.3 Z" fill="#fff"/><path d="M116 742 Q116.5 736.5 121 736.5 Q125.5 736.5 126 741.3" fill="none" stroke="#fff" stroke-width="1.3"/><g fill="#11110f"><rect x="114.5" y="745.5" width="5.5" height="4.5"/><rect x="121.3" y="745" width="6.5" height="5"/><rect x="114.5" y="751.3" width="5.5" height="4.3"/><rect x="121.3" y="751.3" width="6.5" height="5"/></g><circle cx="171" cy="747.8" r="11" fill="#15193a" stroke="#1ec878" stroke-width="2"/><circle cx="220.2" cy="747.8" r="9.6" fill="#2a2a2a"/><circle cx="220.2" cy="747.8" r="8.6" fill="#f5a31a"/><path d="M220.2 742.5 L225.8 752 H214.6 Z" fill="#1a1a1a"/><path d="M220.2 747 L222.8 751 H217.6 Z" fill="#f5a31a"/><path d="M267 737 H271 L277 755 H261 Z" fill="#f48b00"/><path d="M265.4 742 H272.6 L273.8 745.6 H264.2 Z M263 749.2 H275 L276.2 752.8 H261.8 Z" fill="#f2f2f2"/><path d="M259.3 755 H278.7 V758.6 H259.3 Z" fill="#f48b00"/><circle cx="318" cy="748" r="11" fill="#1e8fe8"/><path d="M311 739 Q312 735.5 316 737 Q320 734.5 324 738 L326 742 H310 Z" fill="#2aa8f5"/><ellipse cx="319" cy="747" rx="6.5" ry="5.5" fill="#1a2a9a"/><ellipse cx="315" cy="744.5" rx="3.5" ry="2.2" fill="#5ac8fa"/><path d="M366.5 748.5 L357 758.5" stroke="#3f8f20" stroke-width="1.6"/><g fill="#5cb531"><path transform="translate(367 747.6) rotate(-45) scale(1.12)" d="M0 0 C-6.5 -4.5 -6.5 -10.5 -3 -10.5 C-1 -10.5 0 -9 0 -7.5 C0 -9 1 -10.5 3 -10.5 C6.5 -10.5 6.5 -4.5 0 0 Z"/><path transform="translate(367 747.6) rotate(45) scale(1.12)" d="M0 0 C-6.5 -4.5 -6.5 -10.5 -3 -10.5 C-1 -10.5 0 -9 0 -7.5 C0 -9 1 -10.5 3 -10.5 C6.5 -10.5 6.5 -4.5 0 0 Z"/><path transform="translate(367 747.6) rotate(135) scale(1.12)" d="M0 0 C-6.5 -4.5 -6.5 -10.5 -3 -10.5 C-1 -10.5 0 -9 0 -7.5 C0 -9 1 -10.5 3 -10.5 C6.5 -10.5 6.5 -4.5 0 0 Z"/><path transform="translate(367 747.6) rotate(225) scale(1.12)" d="M0 0 C-6.5 -4.5 -6.5 -10.5 -3 -10.5 C-1 -10.5 0 -9 0 -7.5 C0 -9 1 -10.5 3 -10.5 C6.5 -10.5 6.5 -4.5 0 0 Z"/></g><circle cx="367" cy="747.6" r="1.2" fill="#3f8f20"/><path d="M405 739 H414 L415.5 741 H427 V757 H405 Z" fill="#f7c94a"/><rect x="405" y="742.5" width="22" height="14.5" fill="#fbe08a"/><path d="M409 757 V749 H423 V757 H419 V753 H413 V757 Z" fill="#1ea0e8"/><path d="M456 749.5 C456 741 461 737 466.5 737 C472 737 475.5 741 475.5 747 V749.5 H462.5 C462.8 753 465.5 754.3 468.5 754.3 C471 754.3 473 753.6 474.8 752.5 V757 C473 758 470.5 758.5 467.5 758.5 C461 758.5 457.3 754.5 457.8 748 C458.3 744.5 460 742.3 462.8 741 C461 742.6 460.3 744.3 460.2 745.8 H469.5 C469.5 743 468 741.3 465.5 741.3 C460 741.3 456.5 745 456 749.5 Z" fill="#1182e0"/><rect x="502" y="736" width="24" height="24" rx="1.5" fill="#4b4b4b"/><path d="M508 744 L520 740 V744.5 L512.5 747 L520 749.5 V754.5 L508 758 V753.5 L515.5 751 L508 748.5 Z" fill="#ff9800"/><path d="M552 747 C552 741 557 737.5 563 737.5 C568 737.5 571 739 574.3 742 C574.5 744 572 745.5 569 745.5 C568 752 565 757.5 559.5 757.5 C555 757.5 552 753 552 747 Z" fill="#8fae22"/><circle cx="559.5" cy="750" r="5.2" fill="#e8c21a"/><circle cx="559.5" cy="750" r="3.4" fill="#d6301a"/><circle cx="560" cy="750.3" r="1.5" fill="#e8c21a"/><circle cx="570" cy="741.5" r="1.3" fill="#fff"/><rect x="600" y="736" width="24" height="24" rx="3" fill="#f37021"/><g fill="none" stroke="#fff" stroke-width="2.3" stroke-linecap="round" stroke-linejoin="round"><path d="M609 742 Q604.6 741.6 604.8 745 Q605 747.6 608.2 748 Q605 748.4 604.8 751 Q604.6 754.4 609 754 Q612 751.8 615 754 Q619.4 754.4 619.2 751 Q619 748.4 615.8 748 Q619 747.6 619.2 745 Q619.4 741.6 615 742 Q612 744.2 609 742 Z"/></g><path d="M659 736.8 L670 739.7 L666.3 758 L649.3 752.9 Z" fill="#4fa3bd"/><path d="M660 738.5 L668 740.6 L664 752 L652.5 750 Z" fill="#8fd0e0"/><path d="M649.3 752.9 L666.3 758 L666.8 755.5 L650.5 750.8 Z" fill="#e9f1f4"/><path d="M670 739.7 L671.4 741 L668.2 756.5 L666.3 758 Z" fill="#d8a848"/><path d="M659 736.8 L670 739.7 L669.6 741.3 L658.3 738.4 Z" fill="#d5e6ec"/><rect x="698" y="736" width="24" height="24" fill="#fff"/><path d="M752.5 755.8 L757.3 742.5 Q760.6 732.5 763.6 742 L765 746.2 Q767.8 742 769.6 748 L770.8 755.8 Z" fill="#1a6cf5"/><rect x="748" y="756.3" width="18" height="2" fill="#14284f"/><rect x="764.5" y="757.5" width="2.5" height="1.5" fill="#1a4fb0"/><rect x="249" y="766" width="40" height="2" fill="#c0c0c0"/><rect x="298" y="766" width="40" height="2" fill="#c0c0c0"/><rect x="347" y="766" width="40" height="2" fill="#c0c0c0"/><rect x="543.5" y="766" width="39.5" height="2" fill="#c0c0c0"/><rect x="592" y="766" width="40" height="2" fill="#c0c0c0"/><rect x="641" y="766" width="39.5" height="2" fill="#c0c0c0"/><rect x="690" y="766" width="40" height="2" fill="#c0c0c0"/><rect x="735" y="766" width="48" height="2" fill="#9fb0c4"/><path d="M1172 752 L1178.3 745.3 L1184.6 752" fill="none" stroke="#fff" stroke-width="1.3"/><path d="M1194.5 740.5 H1207.5 V751 H1199 V753.5 H1194.5 Z" fill="#fff"/><g stroke="#11110f" stroke-width="1"><path d="M1196.5 743.5 H1205.5 M1196.5 746 H1205.5 M1196.5 748.5 H1201"/></g><circle cx="1206" cy="752" r="4" fill="#11110f" stroke="#fff" stroke-width="1.2"/><path d="M1203.8 752 H1208.2" stroke="#fff" stroke-width="1.2"/><rect x="1218.5" y="741.5" width="22" height="12" rx="1" fill="none" stroke="#fff" stroke-width="1.2"/><g fill="#fff"><rect x="1221.0" y="744.5" width="1.4" height="1.4"/><rect x="1221.0" y="747" width="1.4" height="1.4"/><rect x="1223.6" y="744.5" width="1.4" height="1.4"/><rect x="1223.6" y="747" width="1.4" height="1.4"/><rect x="1226.2" y="744.5" width="1.4" height="1.4"/><rect x="1226.2" y="747" width="1.4" height="1.4"/><rect x="1228.8" y="744.5" width="1.4" height="1.4"/><rect x="1228.8" y="747" width="1.4" height="1.4"/><rect x="1231.4" y="744.5" width="1.4" height="1.4"/><rect x="1231.4" y="747" width="1.4" height="1.4"/><rect x="1234.0" y="744.5" width="1.4" height="1.4"/><rect x="1234.0" y="747" width="1.4" height="1.4"/><rect x="1236.6" y="744.5" width="1.4" height="1.4"/><rect x="1236.6" y="747" width="1.4" height="1.4"/><rect x="1223" y="750" width="13" height="1.3"/></g><rect x="1362" y="728" width="1" height="40" fill="#5a5a5a"/></svg>
<span class="t" style="left:165.5px;top:740px;font-size:17px;font-style:italic;color:#1ec878;">U</span>
<span class="t" style="left:701.3px;top:743px;font-size:12.5px;color:#ee7fbd;letter-spacing:-1.013px;">B4J</span>
<span class="t" style="left:1252.7px;top:734px;font-size:12px;color:#ffffff;letter-spacing:-1.235px;">POR</span>
<span class="t" style="left:1257.2px;top:751px;font-size:12px;color:#ffffff;letter-spacing:-1.685px;">US</span>
<span class="t" style="left:1307.7px;top:734px;font-size:12px;color:#ffffff;letter-spacing:-0.546px;">10:09</span>
<span class="t" style="left:1292.8px;top:750px;font-size:12px;color:#ffffff;letter-spacing:-0.356px;">15/09/2021</span>
<!-- sec_modal -->
<div class="a" style="left:429px;top:69px;width:330px;height:600px;background:#f6195c;border-radius:8px;"></div>
<div class="a" style="left:709px;top:79px;width:30px;height:30px;background:#ff0000;border-radius:7px;"></div>
<svg class="a" style="left:717px;top:86px" width="14" height="14"><path d="M1.3 1.3 L12.7 12.7 M12.7 1.3 L1.3 12.7" stroke="#fff" stroke-width="1.4"/></svg>
<svg class="a" style="left:530px;top:80px" width="120" height="120" viewBox="530 80 120 120"><path d="M590 118 L539.05 169 V182.3 L544.3 187.7 H557.7 L564.8 181 V176.6 L569.9 175.9 L576.6 169.1 V166.4 L579.7 166.1 L584.4 161.3 V158.3 L587.5 158.1 L595.2 150.5 L606 140 Z" fill="#f5f5f5"/><circle cx="606.6" cy="120.8" r="31.7" fill="#f5f5f5"/><path d="M589.8 106.6 A22 22 0 1 1 620.8 137.6 Z" fill="#f6195c"/><path d="M577.3 145.9 L536 187.2" stroke="#f6195c" stroke-width="3.5"/></svg>
<span class="t" style="left:487.7px;top:194px;font-size:20px;font-weight:bold;color:#fff;letter-spacing:0.395px;">Welcome to B.M.Syst</span>
<span class="t" style="left:452px;top:224px;font-size:13px;font-weight:bold;color:#fff;">We make it easy for everone to maximize</span>
<span class="t" style="left:452px;top:241px;font-size:13px;font-weight:bold;color:#fff;">their ivestiment</span>
<span class="t" style="left:451.7px;top:278px;font-size:14.5px;color:#fff;letter-spacing:-0.504px;">User</span>
<div class="a" style="left:451px;top:299px;width:280px;height:40px;background:#fff;border-radius:3px;box-shadow:inset 0 1px 1px rgba(0,0,0,.15);"></div>
<span class="t" style="left:455.6px;top:349px;font-size:14.5px;color:#fff;letter-spacing:-0.333px;">Password</span>
<div class="a" style="left:451px;top:370px;width:280px;height:40px;background:#fff;border-radius:3px;box-shadow:inset 0 1px 1px rgba(0,0,0,.15);"></div>
<div class="a" style="left:453px;top:430px;width:280px;height:40px;background:#1c1e3c;border-radius:4px;"></div>
<span class="t" style="left:573.4px;top:443px;font-size:15px;font-weight:bold;color:#fff;letter-spacing:-0.204px;">Login</span>
<span class="t" style="left:497.5px;top:642px;font-size:12.5px;font-weight:bold;color:#fff;letter-spacing:-0.429px;">Dont Have account? Create now!</span>
</body></html>
